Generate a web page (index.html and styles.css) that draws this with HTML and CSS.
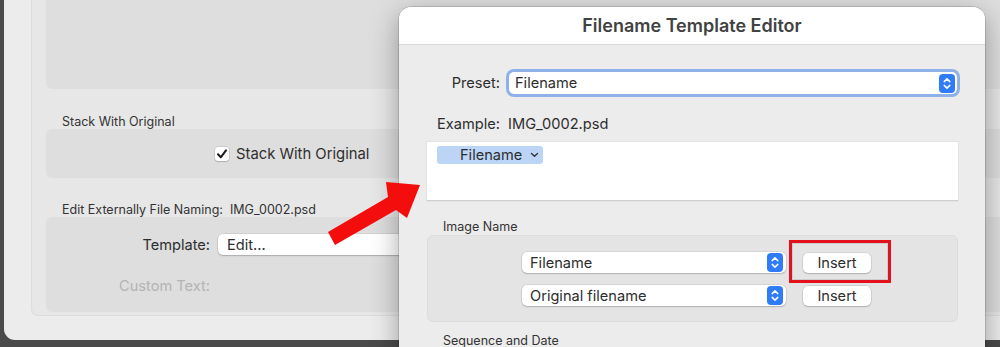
FILE: index.html
```html
<!DOCTYPE html>
<html lang="en">
<head>
    <meta charset="UTF-8">
    <title>Filename Template Editor</title>
    <link rel="stylesheet" href="styles.css">
</head>
<body>
    <div class="desktop">
        <div class="back-window">
            <div class="prefs">
                <div class="group group-top"></div>
                <div class="group-label">Stack With Original</div>
                <div class="group group-stack">
                    <span class="check-box">
                        <svg width="14" height="14" viewBox="0 0 14 14"><path d="M3 7.3 L5.8 10.3 L11 3.4" fill="none" stroke="#1a1a1a" stroke-width="2" stroke-linecap="round" stroke-linejoin="round"/></svg>
                    </span>
                    <span class="check-text">Stack With Original</span>
                </div>
                <div class="group-label label-naming">Edit Externally File Naming:&nbsp; IMG_0002.psd</div>
                <div class="group group-naming">
                    <span class="row-label">Template:</span>
                    <div class="popup popup-edit">Edit...</div>
                    <span class="row-label muted">Custom Text:</span>
                    <span></span>
                </div>
            </div>
        </div>

        <div class="dialog">
            <div class="dialog-title">Filename Template Editor</div>
            <div class="preset-row">
                <span class="preset-label">Preset:</span>
                <div class="focus-ring">
                    <div class="popup popup-preset">
                        <span>Filename</span>
                        <svg class="stepper" width="16" height="19" viewBox="0 0 16 19"><rect width="16" height="19" rx="4" fill="#2f7cf6"/><path d="M5.2 7.6 L8 4.9 L10.8 7.6 M5.2 11.4 L8 14.1 L10.8 11.4" fill="none" stroke="#fff" stroke-width="1.5" stroke-linecap="round" stroke-linejoin="round"/></svg>
                    </div>
                </div>
            </div>
            <div class="example">Example:&nbsp; IMG_0002.psd</div>
            <div class="token-area">
                <span class="token">Filename <svg width="9" height="6" viewBox="0 0 9 6"><path d="M1.5 1.5 L4.5 4.3 L7.5 1.5" fill="none" stroke="#333" stroke-width="1.4" stroke-linecap="round" stroke-linejoin="round"/></svg></span>
            </div>
            <div class="section-label">Image Name</div>
            <div class="insert-group">
                <div class="popup popup-small">
                    <span>Filename</span>
                    <svg class="stepper" width="16" height="19" viewBox="0 0 16 19"><rect width="16" height="19" rx="4" fill="#2f7cf6"/><path d="M5.2 7.6 L8 4.9 L10.8 7.6 M5.2 11.4 L8 14.1 L10.8 11.4" fill="none" stroke="#fff" stroke-width="1.5" stroke-linecap="round" stroke-linejoin="round"/></svg>
                </div>
                <div class="insert-cell">
                    <button class="insert-btn">Insert</button>
                    <div class="highlight"></div>
                </div>
                <div class="popup popup-small">
                    <span>Original filename</span>
                    <svg class="stepper" width="16" height="19" viewBox="0 0 16 19"><rect width="16" height="19" rx="4" fill="#2f7cf6"/><path d="M5.2 7.6 L8 4.9 L10.8 7.6 M5.2 11.4 L8 14.1 L10.8 11.4" fill="none" stroke="#fff" stroke-width="1.5" stroke-linecap="round" stroke-linejoin="round"/></svg>
                </div>
                <div class="insert-cell">
                    <button class="insert-btn">Insert</button>
                </div>
            </div>
            <div class="section-label section-seq">Sequence and Date</div>
        </div>

        <svg class="callout-arrow" width="1000" height="347" viewBox="0 0 1000 347">
            <polygon points="328,232 388,197 386,182 420,185 407,218 396,210 335,245" fill="#f40d0d"/>
        </svg>
    </div>
</body>
</html>
```

FILE: styles.css
```css
* {
    box-sizing: border-box;
}
body {
    margin: 0;
    font-family: Inter, "Liberation Sans", sans-serif;
    color: #2d2d2d;
    background-color: #4a4a4a;
}
.desktop {
    position: relative;
    width: 1000px;
    height: 347px;
    overflow: hidden;
    background-color: #4a4a4a;
}

/* back preferences window */
.back-window {
    margin-left: 4px;
    width: 1020px;
    height: 340px;
    padding-left: 27px;
    background-color: #ececec;
    border-radius: 0 0 0 11px;
}
.prefs {
    height: 316px;
    padding-left: 14px;
    background-color: #e7e7e7;
    border: 1px solid #dcdcdc;
    border-top: none;
    border-radius: 0 0 7px 7px;
}
.group {
    background-color: #dedede;
    border-radius: 6px;
}
.group-top {
    height: 89px;
    border-radius: 0 0 6px 6px;
}
.group-label {
    margin-top: 26px;
    height: 14px;
    line-height: 14px;
    padding-left: 16px;
    font-size: 12.5px;
    color: #333;
}
.label-naming {
    margin-top: 25px;
}
.group-stack {
    height: 49px;
    display: flex;
    align-items: center;
    padding-left: 169px;
}
.check-box {
    width: 14px;
    height: 14px;
    background-color: #fff;
    border-radius: 3px;
    box-shadow: 0 0 0 0.5px rgba(0, 0, 0, 0.15), 0 1px 1px rgba(0, 0, 0, 0.15);
    display: flex;
}
.check-text {
    margin-left: 7px;
    font-size: 14.8px;
    color: #2e2e2e;
}
.group-naming {
    height: 95px;
    padding-top: 17px;
    display: grid;
    grid-template-columns: 164px 600px;
    grid-auto-rows: 21px;
    column-gap: 8px;
    row-gap: 20px;
    align-items: center;
}
.row-label {
    text-align: right;
    font-size: 14.6px;
    color: #2d2d2d;
}
.row-label.muted {
    color: #b3b3b3;
}

/* popups */
.popup {
    background-color: #fff;
    border-radius: 5px;
    box-shadow: 0 0 0 0.5px rgba(0, 0, 0, 0.12), 0 1px 1.5px rgba(0, 0, 0, 0.18);
    display: flex;
    align-items: center;
    justify-content: space-between;
    font-size: 14.6px;
    color: #2d2d2d;
}
.popup-edit {
    height: 21px;
    padding-left: 9px;
}

/* dialog */
.dialog {
    position: absolute;
    left: 399px;
    top: 7px;
    width: 586px;
    height: 390px;
    background-color: #ececec;
    border-radius: 12px;
    overflow: hidden;
    box-shadow: 0 0 0 0.5px rgba(0, 0, 0, 0.25), 0 8px 28px rgba(0, 0, 0, 0.35);
}
.dialog-title {
    height: 38px;
    background-color: #fff;
    border-bottom: 1px solid #d9d9d9;
    display: flex;
    align-items: center;
    justify-content: center;
    font-size: 18px;
    font-weight: 600;
    color: #424242;
}
.preset-row {
    margin-top: 24px;
    display: flex;
    align-items: center;
}
.preset-label {
    width: 101px;
    text-align: right;
    font-size: 14.6px;
}
.focus-ring {
    margin-left: 6px;
    width: 454px;
    height: 28px;
    padding: 3px;
    background-color: #8eb1ea;
    border-radius: 8px;
}
.popup-preset {
    height: 22px;
    padding: 0 2px 0 6px;
    box-shadow: none;
}
.stepper {
    display: block;
}
.example {
    margin-top: 19px;
    margin-left: 38px;
    height: 16px;
    line-height: 16px;
    font-size: 14.6px;
}
.token-area {
    margin-top: 10px;
    margin-left: 28px;
    width: 531px;
    height: 59px;
    padding: 2px 10px;
    background-color: #fff;
    border-bottom: 1px solid #cfcfcf;
    box-shadow: 0 0 0 0.5px rgba(0, 0, 0, 0.08);
}
.token {
    display: inline-flex;
    align-items: center;
    gap: 8px;
    width: 106px;
    height: 18px;
    padding-left: 23px;
    background-color: #bcd5f7;
    border-radius: 3px;
    font-size: 14.6px;
    color: #2d2d2d;
}
.section-label {
    margin-top: 19px;
    margin-left: 44px;
    height: 14px;
    line-height: 14px;
    font-size: 12.5px;
    color: #333;
}
.section-seq {
    margin-top: 12px;
}
.insert-group {
    margin-top: 1px;
    margin-left: 28px;
    width: 531px;
    height: 87px;
    padding: 16px 0 0 94px;
    background-color: #e4e4e4;
    border: 1px solid #dcdcdc;
    border-radius: 6px;
    display: grid;
    grid-template-columns: 264px 68px;
    grid-auto-rows: 21px;
    column-gap: 17px;
    row-gap: 12px;
}
.popup-small {
    height: 21px;
    padding: 0 3px 0 8px;
}
.insert-cell {
    position: relative;
}
.insert-btn {
    width: 68px;
    height: 20px;
    border: none;
    background-color: #fff;
    border-radius: 5px;
    box-shadow: 0 0 0 0.5px rgba(0, 0, 0, 0.12), 0 1px 1.5px rgba(0, 0, 0, 0.18);
    font-family: inherit;
    font-size: 14.6px;
    color: #2d2d2d;
    padding: 0;
}
.highlight {
    position: absolute;
    left: -14px;
    top: -12px;
    width: 102px;
    height: 43px;
    border: 3px solid #e3111b;
    box-shadow: inset 0 0 0 1px #cdcdcd;
}
.callout-arrow {
    position: absolute;
    left: 0;
    top: 0;
}
```
